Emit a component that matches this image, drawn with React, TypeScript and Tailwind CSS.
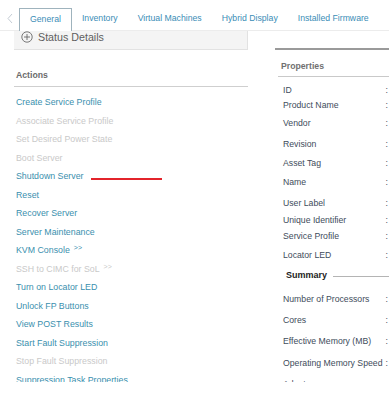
import { useState } from "react";

const tabs = ["General", "Inventory", "Virtual Machines", "Hybrid Display", "Installed Firmware"];

const actions = [
  { name: "Create Service Profile" },
  { name: "Associate Service Profile", disabled: true },
  { name: "Set Desired Power State", disabled: true },
  { name: "Boot Server", disabled: true },
  { name: "Shutdown Server", marked: true },
  { name: "Reset" },
  { name: "Recover Server" },
  { name: "Server Maintenance" },
  { name: "KVM Console", more: true },
  { name: "SSH to CIMC for SoL", more: true, disabled: true },
  { name: "Turn on Locator LED" },
  { name: "Unlock FP Buttons" },
  { name: "View POST Results" },
  { name: "Start Fault Suppression" },
  { name: "Stop Fault Suppression", disabled: true },
  { name: "Suppression Task Properties" },
];

// top margins are uneven in the original, so each row carries its own
const properties = [
  { label: "ID", mt: "mt-[7px]" },
  { label: "Product Name", mt: "mt-[3px]" },
  { label: "Vendor", mt: "mt-[6px]" },
  { label: "Revision", mt: "mt-[9px]" },
  { label: "Asset Tag", mt: "mt-[7px]" },
  { label: "Name", mt: "mt-[7px]" },
  { label: "User Label", mt: "mt-[9px]" },
  { label: "Unique Identifier", mt: "mt-[5px]" },
  { label: "Service Profile", mt: "mt-[4px]" },
  { label: "Locator LED", mt: "mt-[7px]" },
];

const summary = [
  { label: "Number of Processors", mt: "mt-[11px]" },
  { label: "Cores", mt: "mt-[9px]" },
  { label: "Effective Memory (MB)", mt: "mt-[9px]" },
  { label: "Operating Memory Speed", mt: "mt-[10px]" },
  { label: "Adapters", mt: "mt-[9px]" },
];

const PropRow = ({ label, mt }: { label: string; mt: string }) => (
  <div className={`${mt} flex h-[12px] items-center justify-between pl-[8px] text-[8.7px] leading-[12px] text-[#3e4c5b]`}>
    <span>{label}</span>
    <span className="pr-[1px]">:</span>
  </div>
);

const App = () => {
  const [active, setActive] = useState(0);

  return (
    <div className="relative h-[400px] w-[389px] overflow-hidden bg-white font-['Liberation_Sans',Arial,sans-serif]">
      {/* tab bar */}
      <div className="flex h-[31px] items-end border-b border-[#ececec]">
        <div className="flex h-[23px] w-[19px] items-center justify-center">
          <svg width="6" height="11" viewBox="0 0 6 11" fill="none" stroke="#c4ccd4" strokeWidth="1">
            <path d="M5 1L1 5.5L5 10" />
          </svg>
        </div>
        {tabs.map((tab, i) => (
          <div
            key={tab}
            onClick={() => setActive(i)}
            className={
              i === active
                ? "-mb-px flex h-[23px] cursor-pointer items-center border border-b-0 border-[#9fb3bd] bg-white px-[10px] text-[8.7px] text-[#3b8db6]"
                : "flex h-[23px] cursor-pointer items-center px-[10px] text-[8.7px] text-[#3b8db6]"
            }
          >
            {tab}
          </div>
        ))}
      </div>

      <div className="flex h-[351px] overflow-hidden">
        {/* left column */}
        <div className="ml-[14px] w-[234px]">
          <div className="flex h-[19px] items-center gap-[5px] border-r border-b border-[#e2e2e2] bg-[#f4f4f4] pb-[6px] pl-[7px]">
            <svg width="12" height="12" viewBox="0 0 12 12" fill="none" stroke="#6a6a6a" strokeWidth="0.9">
              <circle cx="6" cy="6" r="5.2" />
              <path d="M6 3v6M3 6h6" />
            </svg>
            <span className="text-[10.7px] leading-none text-[#5e5e5e]">Status Details</span>
          </div>

          <div className="mt-[19px] border-b border-[#cfcfcf] pb-[5px] pl-[2px] text-[8.7px] font-bold leading-[12px] text-[#6b6b6b]">
            Actions
          </div>

          <div className="pt-[6.5px]">
            {actions.map((a) => (
              <div key={a.name} className="relative flex h-[18.5px] items-center pl-[2px]">
                <span className={`text-[8.8px] leading-none ${a.disabled ? "text-[#c9c9c9]" : "text-[#3a8fae] cursor-pointer"}`}>
                  {a.name}
                </span>
                {a.more && (
                  <span className={`-mt-[6px] ml-[4px] text-[7px] leading-none ${a.disabled ? "text-[#c9c9c9]" : "text-[#3a8fae]"}`}>
                    &gt;&gt;
                  </span>
                )}
                {a.marked && <div className="absolute left-[77px] top-[10px] h-[2px] w-[71px] bg-[#e3242b]" />}
              </div>
            ))}
          </div>
        </div>

        {/* right column */}
        <div className="ml-[27px] flex-1">
          <div className="mt-[17px] h-[2px] bg-[#9a9a9a]" />
          <div className="mt-[10px] ml-[3px] border-b border-[#c9c9c9] pb-[4px] pl-[3px] text-[8.7px] font-bold leading-[12px] text-[#707070]">
            Properties
          </div>
          {properties.map((p) => (
            <PropRow key={p.label} {...p} />
          ))}
          <div className="mt-[9px] flex h-[12px] items-center gap-[6px] pl-[11px]">
            <span className="text-[9px] font-bold text-[#222]">Summary</span>
            <div className="h-px flex-1 bg-[#b4b4b4]" />
          </div>
          {summary.map((p) => (
            <PropRow key={p.label} {...p} />
          ))}
        </div>
      </div>
    </div>
  );
};

export default App;
